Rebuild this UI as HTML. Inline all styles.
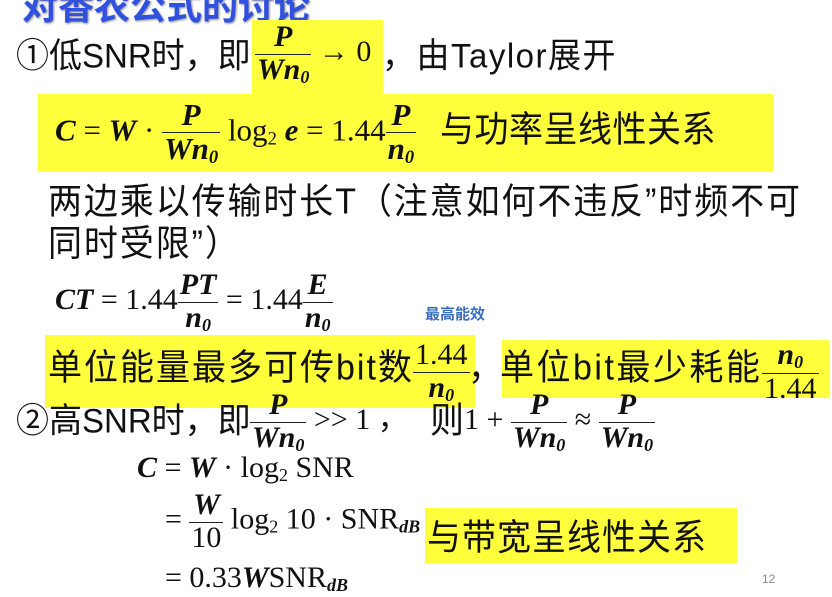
<!DOCTYPE html>
<html><head><meta charset="utf-8"><style>
body{margin:0;width:832px;height:597px;background:#fff;overflow:hidden;position:relative;font-family:"Liberation Sans","Noto Sans CJK SC",sans-serif;color:#111}
.a{position:absolute;white-space:nowrap}
.y{position:absolute;background:#ffff3c}
.cn{font-size:34px;line-height:1;transform:scaleY(1.05);transform-origin:0 0}
.m{font-family:"Liberation Serif",serif;font-size:30px;line-height:1}
.i{font-style:italic;font-weight:bold}
.fr{display:inline-block;vertical-align:middle;text-align:center;line-height:1}
.fr>span{display:block;padding:0 2px}
.fr>span:first-child{border-bottom:1.5px solid #222;padding-bottom:2px}
sub{font-size:60%;vertical-align:-4px}
</style></head><body>
<div class="a" style="left:22px;top:-22px;font-size:36px;font-weight:bold;color:#3050e0;text-shadow:1px 1px 2px #888">对香农公式的讨论</div>

<div class="y" style="left:252px;top:20px;width:131px;height:74px"></div>
<div class="y" style="left:38px;top:94px;width:735px;height:78px"></div>
<div class="y" style="left:45px;top:335px;width:430px;height:73px"></div>
<div class="y" style="left:502px;top:340px;width:327px;height:58px"></div>
<div class="y" style="left:425px;top:508px;width:312px;height:55px"></div>

<div class="a cn" style="left:16px;top:38px;font-size:33px">①低SNR时，即</div>
<div class="a m" style="left:255px;top:22px"><span class="fr i"><span>P</span><span>Wn<sub>0</sub></span></span> → 0</div>
<div class="a cn" style="left:382px;top:38px;font-size:33px;letter-spacing:1.5px">，由Taylor展开</div>

<div class="a m" style="left:55px;top:99px;font-size:31px"><span class="i">C</span> = <span class="i">W</span> · <span class="fr i"><span>P</span><span>Wn<sub>0</sub></span></span> log<sub>2</sub> <span class="i">e</span> = 1.44<span class="fr i"><span>P</span><span>n<sub>0</sub></span></span></div>
<div class="a cn" style="left:440px;top:112px;letter-spacing:0.5px">与功率呈线性关系</div>

<div class="a cn" style="left:48px;top:184px;letter-spacing:1.9px">两边乘以传输时长T（注意如何不违反”时频不可</div>
<div class="a cn" style="left:48px;top:226px;letter-spacing:1.9px">同时受限”）</div>

<div class="a m" style="left:55px;top:270px"><span class="i">CT</span> = 1.44<span class="fr i"><span>PT</span><span>n<sub>0</sub></span></span> = 1.44<span class="fr i"><span>E</span><span>n<sub>0</sub></span></span></div>
<div class="a" style="left:425px;top:303px;font-size:15px;font-weight:bold;color:#3a6fc0">最高能效</div>

<div class="a cn" style="left:48px;top:350px;letter-spacing:2px">单位能量最多可传bit数</div>
<div class="a m" style="left:413px;top:340px"><span class="fr"><span>1.44</span><span class="i">n<sub>0</sub></span></span></div>
<div class="a cn" style="left:468px;top:350px">，</div>
<div class="a cn" style="left:500px;top:350px;letter-spacing:2.5px">单位bit最少耗能</div>
<div class="a m" style="left:762px;top:340px"><span class="fr"><span class="i">n<sub>0</sub></span><span>1.44</span></span></div>

<div class="a cn" style="left:16px;top:403px;font-size:33px">②高SNR时，即</div>
<div class="a m" style="left:250px;top:390px"><span class="fr i"><span>P</span><span>Wn<sub>0</sub></span></span> &gt;&gt; 1 ，</div>
<div class="a cn" style="left:430px;top:403px">则</div>
<div class="a m" style="left:464px;top:390px">1 + <span class="fr i"><span>P</span><span>Wn<sub>0</sub></span></span> ≈ <span class="fr i"><span>P</span><span>Wn<sub>0</sub></span></span></div>

<div class="a m" style="left:137px;top:453px"><span class="i">C</span> = <span class="i">W</span> · log<sub>2</sub> SNR</div>
<div class="a m" style="left:165px;top:490px">= <span class="fr"><span class="i">W</span><span>10</span></span> log<sub>2</sub> 10 · SNR<sub class="i">dB</sub></div>
<div class="a cn" style="left:427px;top:520px;letter-spacing:1px">与带宽呈线性关系</div>
<div class="a m" style="left:165px;top:563px">= 0.33<span class="i">W</span>SNR<sub class="i">dB</sub></div>
<div class="a" style="left:762px;top:572px;font-size:12px;color:#888">12</div>
</body></html>
